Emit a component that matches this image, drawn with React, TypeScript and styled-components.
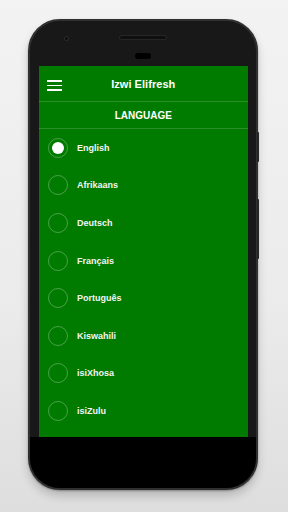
import React, { useState } from 'react';
import styled, { createGlobalStyle } from 'styled-components';

const GlobalStyle = createGlobalStyle`
  html, body {
    margin: 0;
    padding: 0;
  }
  body {
    width: 288px;
    height: 512px;
    overflow: hidden;
    font-family: "Liberation Sans", Arial, sans-serif;
  }
`;

const languages = [
  'English',
  'Afrikaans',
  'Deutsch',
  'Français',
  'Português',
  'Kiswahili',
  'isiXhosa',
  'isiZulu',
];

const App: React.FC = () => {
  const [selected, setSelected] = useState('English');

  return (
    <>
      <GlobalStyle />
      <Page>
        <Phone>
          <SideButton $top={111} $height={30} />
          <SideButton $top={178} $height={60} />
          <TopBezel>
            <Camera />
            <Speaker />
            <Sensor />
          </TopBezel>
          <Screen>
            <AppBar>
              <MenuButton aria-label="menu">
                <span />
                <span />
                <span />
              </MenuButton>
              <AppTitle>Izwi Elifresh</AppTitle>
            </AppBar>
            <SectionTitle>LANGUAGE</SectionTitle>
            <List>
              {languages.map((lang) => (
                <Row key={lang} onClick={() => setSelected(lang)}>
                  <Radio $checked={selected === lang} />
                  <Label>{lang}</Label>
                </Row>
              ))}
            </List>
          </Screen>
          <Chin />
        </Phone>
      </Page>
    </>
  );
};

const Page = styled.div`
  width: 288px;
  height: 512px;
  box-sizing: border-box;
  padding: 19px 0 0 28px;
  background: linear-gradient(to bottom, #f3f3f3 0%, #ebebeb 60%, #dedede 100%);
`;

const Phone = styled.div`
  position: relative;
  width: 230px;
  height: 471px;
  box-sizing: border-box;
  border: 2px solid #303030;
  border-radius: 32px;
  background: #181818;
  display: flex;
  flex-direction: column;
  box-shadow: 0 6px 10px rgba(0, 0, 0, 0.18), 0 1px 2px rgba(0, 0, 0, 0.3);
`;

const SideButton = styled.div<{ $top: number; $height: number }>`
  position: absolute;
  right: -3px;
  top: ${(p) => p.$top}px;
  width: 2px;
  height: ${(p) => p.$height}px;
  background: #262626;
  border-radius: 0 1px 1px 0;
`;

const TopBezel = styled.div`
  position: relative;
  height: 45px;
  flex-shrink: 0;
`;

const Camera = styled.div`
  position: absolute;
  left: 34px;
  top: 15px;
  width: 5px;
  height: 5px;
  border-radius: 50%;
  background: #0c0c0c;
  box-shadow: inset 0 0 0 1px #2c2c2c;
`;

const Speaker = styled.div`
  position: absolute;
  left: 90px;
  top: 15px;
  width: 46px;
  height: 3px;
  border-radius: 2px;
  background: #0f0f0f;
  box-shadow: 0 0 0 1px #262626;
`;

const Sensor = styled.div`
  position: absolute;
  left: 105px;
  top: 32px;
  width: 16px;
  height: 6px;
  border-radius: 3px;
  background: #000;
`;

const Screen = styled.div`
  margin: 0 8px 0 8.5px;
  height: 371px;
  flex-shrink: 0;
  background: #007b00;
  color: #ffffff;
  display: flex;
  flex-direction: column;
`;

const AppBar = styled.div`
  position: relative;
  height: 35px;
  flex-shrink: 0;
  display: flex;
  align-items: center;
  justify-content: center;
  border-bottom: 1px solid rgba(255, 255, 255, 0.16);
`;

const MenuButton = styled.button`
  position: absolute;
  left: 8px;
  top: 14px;
  width: 15px;
  height: 11px;
  padding: 0;
  border: none;
  background: none;
  display: flex;
  flex-direction: column;
  justify-content: space-between;

  span {
    display: block;
    height: 1.6px;
    background: #ffffff;
  }
`;

const AppTitle = styled.div`
  font-size: 11px;
  font-weight: bold;
  letter-spacing: 0.05px;
`;

const SectionTitle = styled.div`
  height: 26px;
  flex-shrink: 0;
  display: flex;
  align-items: center;
  justify-content: center;
  font-size: 10px;
  font-weight: bold;
  border-bottom: 1px solid rgba(255, 255, 255, 0.16);
`;

const List = styled.div`
  display: flex;
  flex-direction: column;
`;

const Row = styled.div`
  height: 37.6px;
  display: flex;
  align-items: center;
  padding-left: 9.5px;
  gap: 9px;
  cursor: pointer;
`;

const Radio = styled.span<{ $checked: boolean }>`
  width: 20px;
  height: 20px;
  box-sizing: border-box;
  border-radius: 50%;
  border: 1px solid rgba(255, 255, 255, 0.28);
  display: flex;
  align-items: center;
  justify-content: center;

  &::after {
    content: '';
    width: 12px;
    height: 12px;
    border-radius: 50%;
    background: #ffffff;
    display: ${(p) => (p.$checked ? 'block' : 'none')};
  }
`;

const Label = styled.span`
  font-size: 9px;
  font-weight: bold;
  color: #f4f4f4;
`;

const Chin = styled.div`
  flex: 1;
  background: #000;
  border-radius: 0 0 30px 30px;
`;

export default App;
